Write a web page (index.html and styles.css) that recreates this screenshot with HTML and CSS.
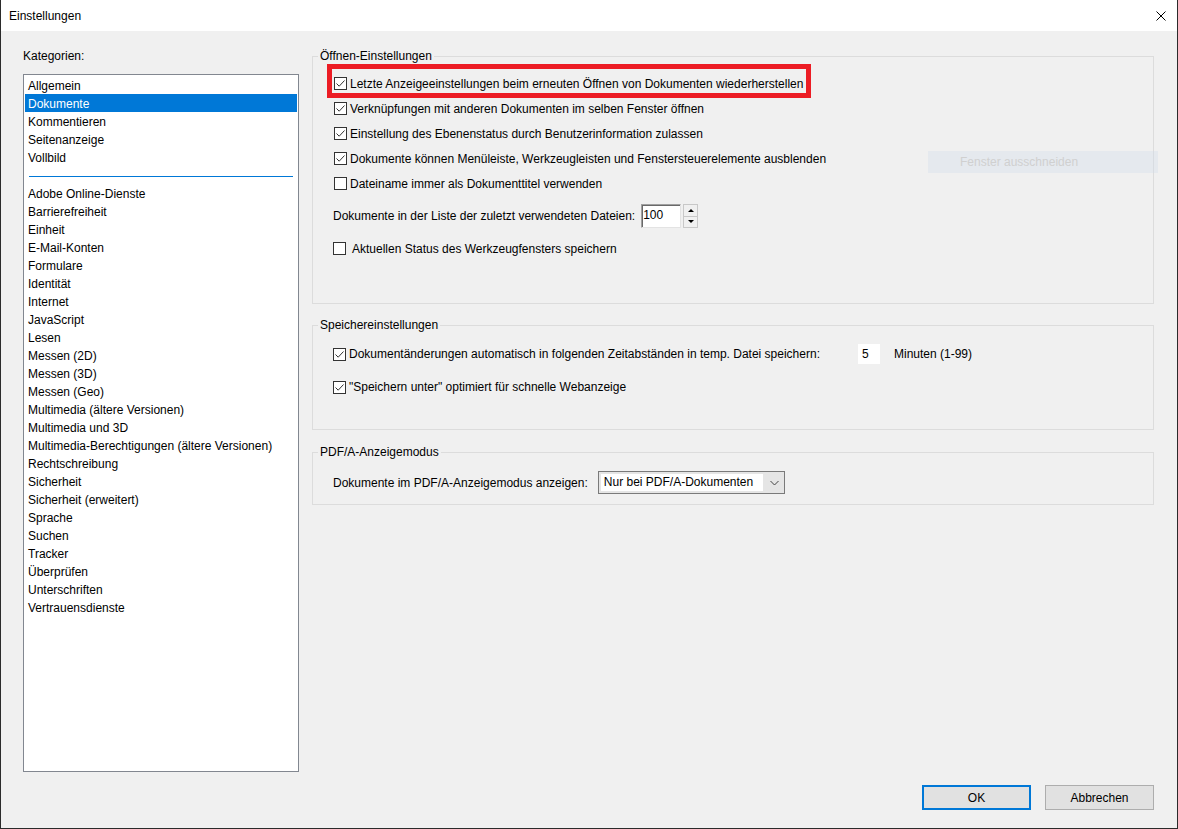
FILE: index.html
```html
<!DOCTYPE html>
<html lang="de">
<head>
    <meta charset="UTF-8">
    <meta name="viewport" content="width=device-width, initial-scale=1.0">
    <title>Einstellungen</title>
    <link rel="stylesheet" href="styles.css">
</head>
<body>

<div class="window">
    <div class="titlebar">
        <span class="title">Einstellungen</span>
        <svg class="close-icon" width="10" height="10" viewBox="0 0 10 10">
            <path d="M0.5 0.5 L9.5 9.5 M9.5 0.5 L0.5 9.5" stroke="#000" stroke-width="1" fill="none"/>
        </svg>
    </div>

    <div class="content">
        <div class="sidebar">
            <div class="cat-label">Kategorien:</div>
            <ul class="cat-list">
                <li>Allgemein</li>
                <li class="selected">Dokumente</li>
                <li>Kommentieren</li>
                <li>Seitenanzeige</li>
                <li>Vollbild</li>
                <li class="separator"></li>
                <li>Adobe Online-Dienste</li>
                <li>Barrierefreiheit</li>
                <li>Einheit</li>
                <li>E-Mail-Konten</li>
                <li>Formulare</li>
                <li>Identität</li>
                <li>Internet</li>
                <li>JavaScript</li>
                <li>Lesen</li>
                <li>Messen (2D)</li>
                <li>Messen (3D)</li>
                <li>Messen (Geo)</li>
                <li>Multimedia (ältere Versionen)</li>
                <li>Multimedia und 3D</li>
                <li>Multimedia-Berechtigungen (ältere Versionen)</li>
                <li>Rechtschreibung</li>
                <li>Sicherheit</li>
                <li>Sicherheit (erweitert)</li>
                <li>Sprache</li>
                <li>Suchen</li>
                <li>Tracker</li>
                <li>Überprüfen</li>
                <li>Unterschriften</li>
                <li>Vertrauensdienste</li>
            </ul>
        </div>

        <div class="main">
            <fieldset class="group">
                <legend>Öffnen-Einstellungen</legend>
                <div class="group-body open-body">
                    <div class="check-row">
                        <span class="check"><svg width="11" height="11" viewBox="0 0 11 11"><path d="M1.5 5.5 L4.2 8.2 L9.5 2.5" stroke="#333" stroke-width="1" fill="none"/></svg></span>
                        <span>Letzte Anzeigeeinstellungen beim erneuten Öffnen von Dokumenten wiederherstellen</span>
                        <div class="red-box"></div>
                    </div>
                    <div class="check-row">
                        <span class="check"><svg width="11" height="11" viewBox="0 0 11 11"><path d="M1.5 5.5 L4.2 8.2 L9.5 2.5" stroke="#333" stroke-width="1" fill="none"/></svg></span>
                        <span>Verknüpfungen mit anderen Dokumenten im selben Fenster öffnen</span>
                    </div>
                    <div class="check-row">
                        <span class="check"><svg width="11" height="11" viewBox="0 0 11 11"><path d="M1.5 5.5 L4.2 8.2 L9.5 2.5" stroke="#333" stroke-width="1" fill="none"/></svg></span>
                        <span>Einstellung des Ebenenstatus durch Benutzerinformation zulassen</span>
                    </div>
                    <div class="check-row">
                        <span class="check"><svg width="11" height="11" viewBox="0 0 11 11"><path d="M1.5 5.5 L4.2 8.2 L9.5 2.5" stroke="#333" stroke-width="1" fill="none"/></svg></span>
                        <span>Dokumente können Menüleiste, Werkzeugleisten und Fenstersteuerelemente ausblenden</span>
                    </div>
                    <div class="check-row">
                        <span class="check"></span>
                        <span>Dateiname immer als Dokumenttitel verwenden</span>
                    </div>

                    <div class="field-row spin-row">
                        <span>Dokumente in der Liste der zuletzt verwendeten Dateien:</span>
                        <span class="spin-input">100</span>
                        <span class="spin-buttons">
                            <span class="spin-btn"><span class="arrow-up"></span></span>
                            <span class="spin-btn"><span class="arrow-down"></span></span>
                        </span>
                    </div>

                    <div class="check-row wide-gap">
                        <span class="check"></span>
                        <span>Aktuellen Status des Werkzeugfensters speichern</span>
                    </div>
                </div>
            </fieldset>

            <fieldset class="group save-group">
                <legend>Speichereinstellungen</legend>
                <div class="group-body save-body">
                    <div class="check-row small">
                        <span class="check"><svg width="11" height="11" viewBox="0 0 11 11"><path d="M1.5 5.5 L4.2 8.2 L9.5 2.5" stroke="#333" stroke-width="1" fill="none"/></svg></span>
                        <span>Dokumentänderungen automatisch in folgenden Zeitabständen in temp. Datei speichern:</span>
                        <span class="minutes-input">5</span>
                        <span class="minutes-label">Minuten (1-99)</span>
                    </div>
                    <div class="check-row small">
                        <span class="check"><svg width="11" height="11" viewBox="0 0 11 11"><path d="M1.5 5.5 L4.2 8.2 L9.5 2.5" stroke="#333" stroke-width="1" fill="none"/></svg></span>
                        <span>"Speichern unter" optimiert für schnelle Webanzeige</span>
                    </div>
                </div>
            </fieldset>

            <fieldset class="group pdfa-group">
                <legend>PDF/A-Anzeigemodus</legend>
                <div class="group-body pdfa-body">
                    <div class="field-row">
                        <span>Dokumente im PDF/A-Anzeigemodus anzeigen:</span>
                        <span class="select">
                            <span class="select-value">Nur bei PDF/A-Dokumenten</span>
                            <span class="select-arrow">
                                <svg width="9" height="6" viewBox="0 0 9 6"><path d="M0.5 1 L4.5 5 L8.5 1" stroke="#444" stroke-width="1" fill="none"/></svg>
                            </span>
                        </span>
                    </div>
                </div>
            </fieldset>
        </div>
    </div>

    <div class="footer">
        <button class="btn btn-default">OK</button>
        <button class="btn">Abbrechen</button>
    </div>

    <div class="ghost-button">Fenster ausschneiden</div>
</div>

</body>
</html>
```

FILE: styles.css
```css
* {
    box-sizing: border-box;
}

html, body {
    margin: 0;
    padding: 0;
}

body {
    font-family: "Liberation Sans", Arial, sans-serif;
    font-size: 12px;
    color: #000;
    background: #2b2b2b;
}

.window {
    position: relative;
    width: 1178px;
    height: 829px;
    background: #f0f0f0;
    border-left: 1px solid #2b2b2b;
    border-right: 1px solid #2b2b2b;
    border-bottom: 1px solid #2b2b2b;
    display: flex;
    flex-direction: column;
}

.titlebar {
    height: 31px;
    flex: none;
    background: #fff;
    display: flex;
    align-items: center;
    justify-content: space-between;
    padding: 0 11px 0 8px;
}

.close-icon {
    display: block;
}

.content {
    display: flex;
    gap: 13px;
    padding: 17px 23px 0 22px;
}

/* Kategorien */
.sidebar {
    width: 276px;
    flex: none;
}

.cat-label {
    height: 16px;
    line-height: 17px;
}

.cat-list {
    list-style: none;
    margin: 10px 0 0;
    padding: 1px 0;
    height: 698px;
    background: #fff;
    border: 1px solid #828790;
}

.cat-list li {
    height: 18px;
    line-height: 20px;
    padding-left: 3px;
    margin: 0 1px;
    white-space: nowrap;
}

.cat-list li.selected {
    background: #0078d7;
    color: #fff;
}

.cat-list li.separator {
    padding: 10px 0 0;
}

.cat-list li.separator::after {
    content: "";
    display: block;
    height: 1px;
    margin: 0 4px;
    background: #0078d7;
}

/* Gruppen */
.main {
    flex: 1;
    display: flex;
    flex-direction: column;
}

.group {
    margin: 0;
    padding: 0;
    min-width: 0;
    border: 1px solid #dcdcdc;
}

.group legend {
    margin-left: 5px;
    padding: 0 2px;
    line-height: 17px;
}

.save-group {
    margin-top: 13px;
}

.pdfa-group {
    margin-top: 14px;
}

.open-body {
    padding: 6px 0 42px;
}

.save-body {
    padding: 9px 0 31px;
    display: flex;
    flex-direction: column;
    gap: 11px;
}

.pdfa-body {
    padding: 10px 0 10px;
}

.check-row {
    position: relative;
    height: 25px;
    display: flex;
    align-items: center;
    gap: 3px;
    padding-left: 21px;
    white-space: nowrap;
}

.check-row.small {
    height: 22px;
    padding-left: 20px;
}

.check-row.wide-gap {
    margin-top: 8px;
    padding-left: 20px;
    gap: 6px;
}

.check {
    width: 13px;
    height: 13px;
    flex: none;
    border: 1px solid #333;
    background: #fff;
    display: flex;
}

.check svg {
    display: block;
}

/* rote Markierung */
.red-box {
    position: absolute;
    left: 14px;
    top: -7px;
    width: 484px;
    height: 34px;
    border: 5px solid #ec1c24;
}

.field-row {
    display: flex;
    align-items: center;
    padding-left: 20px;
    white-space: nowrap;
}

.spin-row {
    margin-top: 8px;
    height: 24px;
}

.spin-input {
    margin-left: 6px;
    width: 40px;
    height: 24px;
    line-height: 20px;
    padding-left: 1px;
    background: #fff;
    border: 1px solid;
    border-color: #a0a0a0 #e3e3e3 #e3e3e3 #a0a0a0;
    box-shadow: inset 1px 1px 0 #696969;
}

.spin-buttons {
    margin-left: 2px;
    width: 15px;
    height: 24px;
    display: flex;
    flex-direction: column;
}

.spin-btn {
    flex: 1;
    display: flex;
    align-items: center;
    justify-content: center;
    background: #f0f0f0;
    border: 1px solid #c8c8c8;
}

.spin-btn + .spin-btn {
    border-top: none;
}

.arrow-up {
    border-left: 3px solid transparent;
    border-right: 3px solid transparent;
    border-bottom: 3px solid #000;
}

.arrow-down {
    border-left: 3px solid transparent;
    border-right: 3px solid transparent;
    border-top: 3px solid #000;
}

.minutes-input {
    margin-left: 35px;
    width: 22px;
    height: 20px;
    line-height: 20px;
    padding-left: 4px;
    background: #fff;
}

.minutes-label {
    margin-left: 11px;
}

.select {
    margin-left: 10px;
    width: 187px;
    height: 23px;
    display: flex;
    border: 1px solid #7a7a7a;
    background: #e5e5e5;
}

.select-value {
    flex: 1;
    margin: 2px;
    padding-left: 3px;
    line-height: 17px;
    background: #fff;
}

.select-arrow {
    width: 19px;
    display: flex;
    align-items: center;
    justify-content: center;
}

/* Buttons */
.footer {
    display: flex;
    justify-content: flex-end;
    gap: 14px;
    padding: 13px 23px 0 0;
}

.btn {
    width: 109px;
    height: 25px;
    padding: 0;
    font: inherit;
    color: #000;
    background: #e1e1e1;
    border: 1px solid #adadad;
}

.btn-default {
    border: 2px solid #0078d7;
}

.ghost-button {
    position: absolute;
    left: 927px;
    top: 151px;
    width: 230px;
    height: 22px;
    line-height: 22px;
    padding-left: 32px;
    color: #d0d0d0;
    background: rgba(210, 222, 235, 0.35);
}
```
